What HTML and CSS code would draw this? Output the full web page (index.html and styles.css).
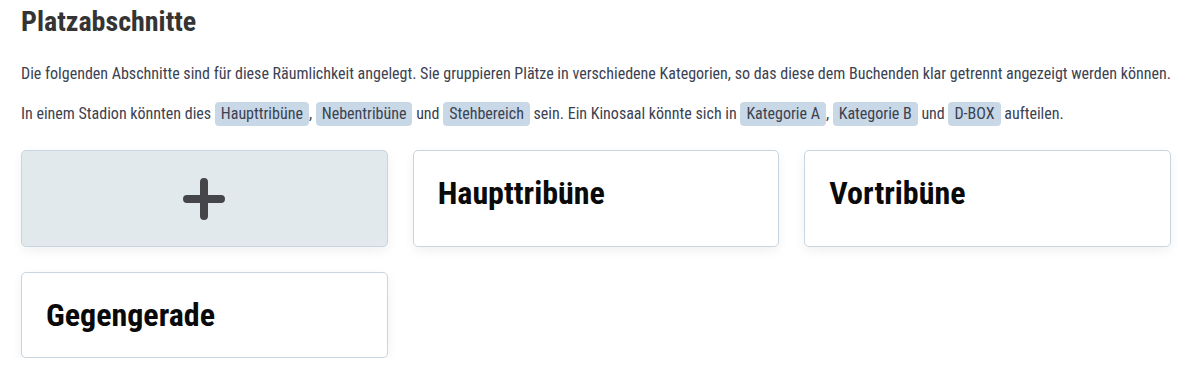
FILE: index.html
```html
<!DOCTYPE html>
<html lang="de">
<head>
    <meta charset="UTF-8">
    <meta name="viewport" content="width=device-width, initial-scale=1.0">
    <title>Platzabschnitte</title>
    <link rel="stylesheet" href="styles.css">
</head>
<body>
    <div class="sections-page">
        <h1>Platzabschnitte</h1>
        <p>Die folgenden Abschnitte sind für diese Räumlichkeit angelegt. Sie gruppieren Plätze in verschiedene Kategorien, so das diese dem Buchenden klar getrennt angezeigt werden können.</p>
        <p>In einem Stadion könnten dies <span class="tag">Haupttribüne</span>, <span class="tag">Nebentribüne</span> und <span class="tag">Stehbereich</span> sein. Ein Kinosaal könnte sich in <span class="tag">Kategorie A</span>, <span class="tag">Kategorie B</span> und <span class="tag">D-BOX</span> aufteilen.</p>

        <div class="section-grid">
            <button class="section-card add-card" type="button" aria-label="Abschnitt hinzufügen">
                <svg width="42" height="42" viewBox="0 0 42 42">
                    <path d="M21 4 V38 M4 21 H38" stroke="#444649" stroke-width="8" stroke-linecap="round" fill="none"/>
                </svg>
            </button>
            <div class="section-card">
                <h2>Haupttribüne</h2>
            </div>
            <div class="section-card">
                <h2>Vortribüne</h2>
            </div>
            <div class="section-card">
                <h2>Gegengerade</h2>
            </div>
        </div>
    </div>
</body>
</html>
```

FILE: styles.css
```css
* {
    margin: 0;
    padding: 0;
    box-sizing: border-box;
}

body {
    font-family: Roboto, "Liberation Sans", sans-serif;
    font-stretch: 75%;
    background: #fff;
    color: #3b4252;
}

.sections-page {
    padding: 5px 15px 0 21px;
}

h1 {
    font-size: 28px;
    font-weight: 700;
    color: #343434;
    line-height: 34px;
    margin-bottom: 23px;
}

p {
    font-size: 16px;
    line-height: 24px;
    margin-bottom: 16px;
}

.tag {
    display: inline-block;
    background: #c9d8e6;
    border-radius: 4px;
    padding: 0 6px;
    line-height: 24px;
}

.section-grid {
    display: grid;
    grid-template-columns: repeat(3, 1fr);
    gap: 25px;
    margin-top: 24px;
    width: 1150px;
}

.section-card {
    background: #fff;
    border: 1px solid #c9d5e1;
    border-radius: 5px;
    box-shadow: 0 4px 12px rgba(0, 0, 0, 0.06);
    padding: 25px 24px;
}

.add-card {
    background: #e2e9ed;
    display: flex;
    align-items: center;
    justify-content: center;
    height: 97px;
    cursor: pointer;
    font: inherit;
}

.section-card h2 {
    font-size: 32px;
    font-weight: 700;
    color: #0a0a0a;
    line-height: 34px;
}
```
